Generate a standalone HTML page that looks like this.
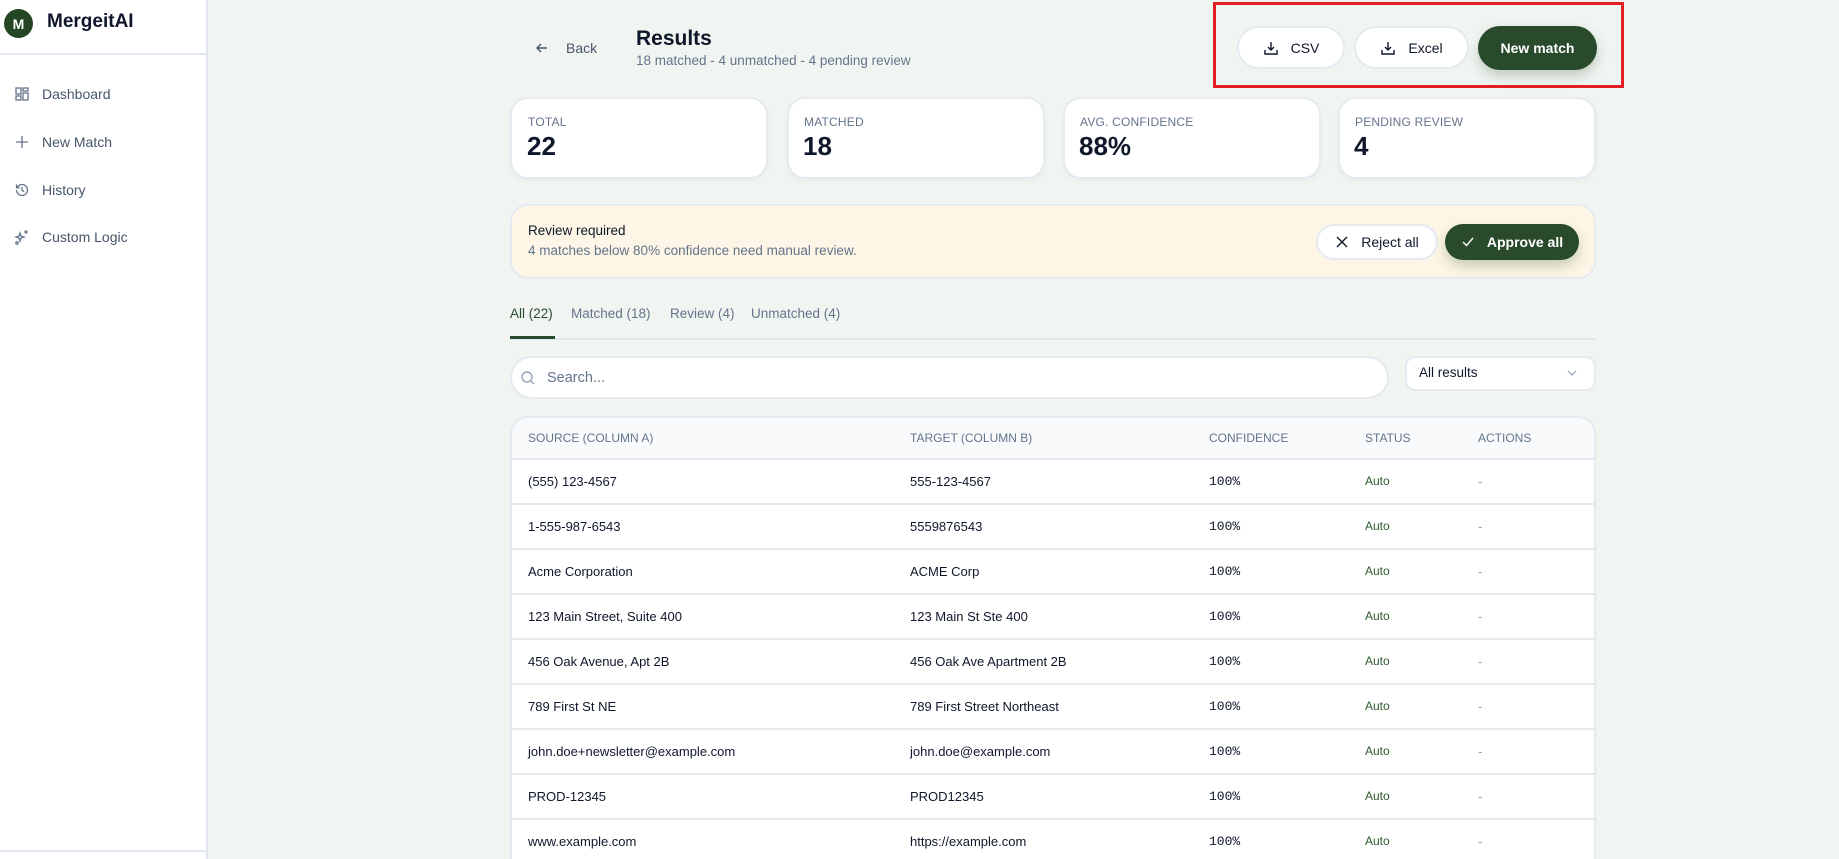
<!DOCTYPE html>
<html style="overflow:hidden;height:859px"><head><meta charset="utf-8"><style>
*{box-sizing:border-box;margin:0;padding:0}
body{width:1839px;height:859px;overflow:hidden;background:#f1f5f2;font-family:"Liberation Sans",sans-serif;color:#0f172a;position:relative}
.abs{position:absolute}
.side{left:0;top:0;width:208px;height:859px;background:#fff;border-right:2px solid #e2e8f0}
.nav{left:14px;font-size:14px;color:#475569;display:flex;align-items:center;gap:12px}
.nav svg{width:16px;height:16px}
.card{background:#fff;border:2px solid #e5eaf1;border-radius:18px;box-shadow:0 2px 6px rgba(0,0,0,.04)}
.lbl{font-size:12px;color:#64748b;letter-spacing:.2px}
.val{font-size:26px;font-weight:bold;color:#0f172a}
.btn{border:2px solid #e5eaf1;background:#fff;border-radius:22px;display:flex;align-items:center;justify-content:center;gap:12px;font-size:14px;color:#0f172a}
.gbtn{background:#2a4a2c;color:#fff;border-radius:22px;display:flex;align-items:center;justify-content:center;gap:12px;font-size:14px;font-weight:bold;box-shadow:0 6px 12px rgba(42,74,44,.25)}
.row{left:512px;width:1082px;height:45px;border-top:2px solid #e5eaf1;background:#fff;font-size:13px;color:#0f172a}
.row span{position:absolute;top:14px}
.c1{left:16px}.c2{left:398px}.c3{left:697px;font-family:"Liberation Mono",monospace;font-size:13px}.c4{left:853px;color:#2f5a2f;font-size:12px}.c5{left:966px;color:#94a3b8}
</style></head><body>
<div class="abs side"></div>
<div class="abs" style="left:0;top:53px;width:207px;height:2px;background:#e2e8f0"></div>
<div class="abs" style="left:0;top:850px;width:207px;height:2px;background:#e2e8f0"></div>
<div class="abs" style="left:4px;top:9px;width:29px;height:29px;border-radius:50%;background:#244625;color:#fff;font-weight:bold;font-size:14px;display:flex;align-items:center;justify-content:center">M</div>
<div class="abs" style="left:47px;top:11px;font-size:19px;font-weight:bold">MergeitAI</div>
<div class="abs nav" style="top:86px"><svg viewBox="0 0 16 16" fill="none" stroke="#64748b" stroke-width="1.3"><rect x="2" y="2" width="5" height="6"/><rect x="9" y="2" width="5" height="3"/><rect x="9" y="7" width="5" height="7"/><rect x="2" y="10" width="5" height="4"/></svg>Dashboard</div>
<div class="abs nav" style="top:134px"><svg viewBox="0 0 16 16" fill="none" stroke="#64748b" stroke-width="1.3"><path d="M8 2v12M2 8h12"/></svg>New Match</div>
<div class="abs nav" style="top:182px"><svg viewBox="0 0 16 16" fill="none" stroke="#64748b" stroke-width="1.3"><path d="M2.5 8a5.5 5.5 0 1 0 1.6-3.9L2.5 5.7M2.5 2.5v3.2h3.2M8 5v3.2l2 1.5"/></svg>History</div>
<div class="abs nav" style="top:229px"><svg viewBox="0 0 16 16" fill="none" stroke="#64748b" stroke-width="1.3"><path d="M6 4l1 3 3 1-3 1-1 3-1-3-3-1 3-1zM12 1v4M10 3h4"/><circle cx="3" cy="14" r="1.2"/></svg>Custom Logic</div>

<svg class="abs" style="left:534px;top:40px" width="16" height="16" viewBox="0 0 16 16" fill="none" stroke="#475569" stroke-width="1.4"><path d="M13 8H3M7 4L3 8l4 4"/></svg>
<div class="abs" style="left:566px;top:40px;font-size:14px;color:#475569">Back</div>
<div class="abs" style="left:636px;top:27px;font-size:21px;font-weight:bold">Results</div>
<div class="abs" style="left:636px;top:53px;font-size:13.5px;color:#64748b">18 matched - 4 unmatched - 4 pending review</div>

<div class="abs" style="left:1213px;top:2px;width:411px;height:86px;border:3px solid #e31e24"></div>
<div class="abs btn" style="left:1237px;top:26px;width:108px;height:43px"><svg width="16" height="16" viewBox="0 0 16 16" fill="none" stroke="#0f172a" stroke-width="1.4"><path d="M8 2v8M5 7l3 3 3-3M2 10v4h12v-4"/></svg>CSV</div>
<div class="abs btn" style="left:1354px;top:26px;width:115px;height:43px"><svg width="16" height="16" viewBox="0 0 16 16" fill="none" stroke="#0f172a" stroke-width="1.4"><path d="M8 2v8M5 7l3 3 3-3M2 10v4h12v-4"/></svg>Excel</div>
<div class="abs gbtn" style="left:1478px;top:26px;width:119px;height:44px">New match</div>

<div class="abs card" style="left:510px;top:97px;width:258px;height:82px"></div>
<div class="abs card" style="left:787px;top:97px;width:258px;height:82px"></div>
<div class="abs card" style="left:1063px;top:97px;width:258px;height:82px"></div>
<div class="abs card" style="left:1338px;top:97px;width:258px;height:82px"></div>
<div class="abs lbl" style="left:528px;top:115px">TOTAL</div><div class="abs val" style="left:527px;top:131px">22</div>
<div class="abs lbl" style="left:804px;top:115px">MATCHED</div><div class="abs val" style="left:803px;top:131px">18</div>
<div class="abs lbl" style="left:1080px;top:115px">AVG. CONFIDENCE</div><div class="abs val" style="left:1079px;top:131px">88%</div>
<div class="abs lbl" style="left:1355px;top:115px">PENDING REVIEW</div><div class="abs val" style="left:1354px;top:131px">4</div>

<div class="abs" style="left:510px;top:204px;width:1086px;height:75px;background:#fdf6e6;border:2px solid #e5eaf1;border-radius:18px"></div>
<div class="abs" style="left:528px;top:223px;font-size:13.5px">Review required</div>
<div class="abs" style="left:528px;top:243px;font-size:13.5px;color:#64748b">4 matches below 80% confidence need manual review.</div>
<div class="abs btn" style="left:1316px;top:224px;width:122px;height:36px;border-radius:18px;font-size:14px"><svg width="14" height="14" viewBox="0 0 14 14" stroke="#0f172a" stroke-width="1.4"><path d="M2 2l10 10M12 2L2 12"/></svg>Reject all</div>
<div class="abs gbtn" style="left:1445px;top:224px;width:134px;height:36px;border-radius:18px"><svg width="14" height="14" viewBox="0 0 14 14" fill="none" stroke="#fff" stroke-width="1.4"><path d="M2 7l3.5 3.5L12 3"/></svg>Approve all</div>

<div class="abs" style="left:510px;top:306px;font-size:13.5px;color:#2a4a2c">All (22)</div>
<div class="abs" style="left:571px;top:306px;font-size:13.5px;color:#64748b">Matched (18)</div>
<div class="abs" style="left:670px;top:306px;font-size:13.5px;color:#64748b">Review (4)</div>
<div class="abs" style="left:751px;top:306px;font-size:13.5px;color:#64748b">Unmatched (4)</div>
<div class="abs" style="left:510px;top:338px;width:1086px;height:2px;background:#e2e8f0"></div>
<div class="abs" style="left:510px;top:336px;width:45px;height:3px;background:#2a4a2c"></div>

<div class="abs" style="left:510px;top:356px;width:879px;height:43px;background:#fff;border:2px solid #e5eaf1;border-radius:22px"></div>
<svg class="abs" style="left:520px;top:370px" width="16" height="16" viewBox="0 0 16 16" fill="none" stroke="#94a3b8" stroke-width="1.4"><circle cx="7" cy="7" r="5"/><path d="M11 11l3 3"/></svg>
<div class="abs" style="left:547px;top:370px;font-size:14.5px;color:#64748b">Search...</div>
<div class="abs" style="left:1405px;top:356px;width:191px;height:35px;background:#fff;border:2px solid #e5eaf1;border-radius:10px"></div>
<div class="abs" style="left:1419px;top:365px;font-size:13.5px">All results</div>
<svg class="abs" style="left:1566px;top:368px" width="12" height="10" viewBox="0 0 12 10" fill="none" stroke="#94a3b8" stroke-width="1.2"><path d="M2 3l4 4 4-4"/></svg>

<div class="abs" style="left:510px;top:416px;width:1086px;height:443px;background:#fff;border:2px solid #e5eaf1;border-bottom:none;border-radius:18px 18px 0 0;overflow:hidden"><div style="height:43px;background:#f8fafc"></div></div>
<div class="abs" style="left:512px;top:416px;width:1082px;height:43px;font-size:12px;color:#64748b">
<span class="abs" style="left:16px;top:15px">SOURCE (COLUMN A)</span><span class="abs" style="left:398px;top:15px">TARGET (COLUMN B)</span><span class="abs" style="left:697px;top:15px">CONFIDENCE</span><span class="abs" style="left:853px;top:15px">STATUS</span><span class="abs" style="left:966px;top:15px">ACTIONS</span></div>

<div class="abs row" style="top:458px"><span class="c1">(555) 123-4567</span><span class="c2">555-123-4567</span><span class="c3">100%</span><span class="c4">Auto</span><span class="c5">-</span></div>
<div class="abs row" style="top:503px"><span class="c1">1-555-987-6543</span><span class="c2">5559876543</span><span class="c3">100%</span><span class="c4">Auto</span><span class="c5">-</span></div>
<div class="abs row" style="top:548px"><span class="c1">Acme Corporation</span><span class="c2">ACME Corp</span><span class="c3">100%</span><span class="c4">Auto</span><span class="c5">-</span></div>
<div class="abs row" style="top:593px"><span class="c1">123 Main Street, Suite 400</span><span class="c2">123 Main St Ste 400</span><span class="c3">100%</span><span class="c4">Auto</span><span class="c5">-</span></div>
<div class="abs row" style="top:638px"><span class="c1">456 Oak Avenue, Apt 2B</span><span class="c2">456 Oak Ave Apartment 2B</span><span class="c3">100%</span><span class="c4">Auto</span><span class="c5">-</span></div>
<div class="abs row" style="top:683px"><span class="c1">789 First St NE</span><span class="c2">789 First Street Northeast</span><span class="c3">100%</span><span class="c4">Auto</span><span class="c5">-</span></div>
<div class="abs row" style="top:728px"><span class="c1">john.doe+newsletter@example.com</span><span class="c2">john.doe@example.com</span><span class="c3">100%</span><span class="c4">Auto</span><span class="c5">-</span></div>
<div class="abs row" style="top:773px"><span class="c1">PROD-12345</span><span class="c2">PROD12345</span><span class="c3">100%</span><span class="c4">Auto</span><span class="c5">-</span></div>
<div class="abs row" style="top:818px;height:41px"><span class="c1">www.example.com</span><span class="c2">https://example.com</span><span class="c3">100%</span><span class="c4">Auto</span><span class="c5">-</span></div>
</body></html>
